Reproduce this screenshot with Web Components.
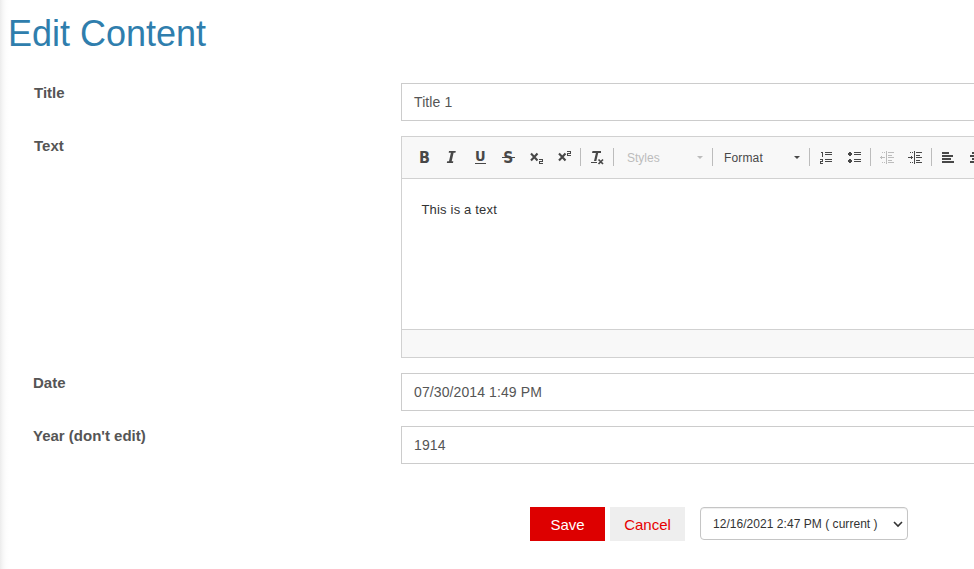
<!DOCTYPE html>
<html lang="en"><head><meta charset="utf-8"><title>Edit Content</title>
<style>
html,body{margin:0;height:100%;overflow:hidden;background:#fff}
body{font-family:"Liberation Sans",Arial,sans-serif;color:#555}
</style></head><body>
<edit-page>
  <form-row label="Title" style="--indent:34px"><text-field>Title 1</text-field></form-row>
  <form-row label="Text" style="--indent:34px"><rich-editor>This is a text</rich-editor></form-row>
  <form-row label="Date"><text-field>07/30/2014 1:49 PM</text-field></form-row>
  <form-row label="Year (don't edit)"><text-field>1914</text-field></form-row>
  <action-button slot="actions" kind="primary">Save</action-button>
  <action-button slot="actions">Cancel</action-button>
  <version-select slot="actions">12/16/2021 2:47 PM ( current )</version-select>
</edit-page>
<script>
const define=(name,html)=>customElements.define(name,class extends HTMLElement{
  constructor(){super();this.attachShadow({mode:'open'}).innerHTML=typeof html==='function'?html(this):html;}
});
define('edit-page',`<style>
:host{display:block;width:974px;height:569px;overflow:hidden;background:linear-gradient(to right,#ececec 0,#f7f7f7 3px,#fdfdfd 6px,#fff 9px)}
h1{margin:0;padding:14px 0 0 8px;font-size:36px;line-height:40px;font-weight:400;color:#2f7ead}
.rows{display:flex;flex-direction:column;gap:15px;padding-top:29px}
.actions{display:flex;padding:43px 0 0 530px;gap:5px;align-items:flex-start}
</style><h1>Edit Content</h1><div class="rows"><slot></slot></div><div class="actions"><slot name="actions"></slot></div>`);
define('form-row',el=>`<style>
:host{display:grid;grid-template-columns:401px 600px}
label{padding-left:var(--indent,33px);font-weight:700;font-size:15px;line-height:20px}
</style><label>${el.getAttribute('label')}</label><slot></slot>`);
define('text-field',`<style>
:host{display:block;box-sizing:border-box;height:38px;border:1px solid #ccc;background:#fff;padding:0 12px;font-size:14px;line-height:37px;letter-spacing:.1px;color:#555}
</style><slot></slot>`);
define('action-button',`<style>
:host{display:block;width:75px;height:34px;line-height:35px;text-align:center;font-size:15px;background:#eee;color:#e60000}
:host([kind=primary]){background:#d00;color:#fff}
</style><slot></slot>`);
define('version-select',`<style>
:host{display:flex;box-sizing:border-box;align-items:center;justify-content:space-between;margin-left:10px;width:208px;height:33px;border:1px solid #c5c5c5;border-radius:4px;padding:0 4px 0 12px;font-size:12px;letter-spacing:.04px;color:#333;background:#fff;box-shadow:inset 0 1px 1px #0001;white-space:nowrap}
</style><span><slot></slot></span><svg width="10" height="8" viewBox="0 0 10 8"><path d="M1 2l4 4 4-4" fill="none" stroke="#333" stroke-width="1.6"/></svg>`);

const T=(s,x,y,size)=>`<text x="${x}" y="${y}" font-family="DejaVu Sans Condensed,DejaVu Sans" font-stretch="condensed" font-weight="700" font-size="${size}">${s}</text>`;
const two=(x,y)=>`<path d="M${x} ${y}h4v3h-3v1h3v1h-4v-3h3v-1h-3z"/>`;
const cross='<path d="M3 4.5l6.5 7M9.5 4.5L3 11.5" fill="none" stroke="currentColor" stroke-width="2.1"/>';
const dent=d=>`<path d="M7 2h1v13H7zM9 3h6v1H9zM9 6h4v1H9zM9 8h6v1H9zM9 11h4v1H9zM9 13h6v1H9zM3 3h1v1H3zM5 3h1v1H5zM3 13h1v1H3zM5 13h1v1H5zM1 8h5v1H1z${d}"/>`;
const icons={
 bold:T('B',3.1,14,16),
 italic:'<path d="M5 2h6.8l-.4 1.7H9.6L7.7 12.3h1.6L9 14H2.8l.4-1.7H5L6.9 3.7H4.7z"/>',
 underline:T('U',3,12.4,14.5)+'<path d="M3 14h11v1H3z"/>',
 strike:T('S',3.2,14,15.5)+'<path d="M2 8h13v1H2z"/>',
 sub:cross+two(11,10),
 sup:cross+two(11,2),
 clear:'<path d="M3.5 2H12v2H9.2L7.3 12H5L6.9 4H3zM2 13h6v1H2z"/><path d="M9.5 10.5l4.5 4.5M14 10.5L9.5 15" fill="none" stroke="currentColor" stroke-width="1.7"/>',
 ol:'<path d="M3 3h2v5H4V4H3zM7 3h7v1H7zM7 5h7v1H7zM7 10h7v1H7zM7 12h7v1H7zM2 10h3v3H3v1h2v1H2v-3h2v-1H2z"/>',
 ul:'<path d="M3 3h2v4H3zM2 4h4v2H2zM3 10h2v4H3zM2 11h4v2H2zM8 3h7v1H8zM8 5h7v1H8zM8 10h7v1H8zM8 12h7v1H8z"/>',
 outdent:dent('M2 7h1v3H2z'),
 indent:dent('M4 7h1v3H4z'),
 left:'<path d="M2 3h7v2H2zM2 6h11v2H2zM2 9h9v2H2zM2 12h12v2H2z"/>',
 center:'<path d="M4 3h7v2H4zM2 6h11v2H2zM4 9h7v2H4zM2 12h12v2H2z"/>'
};
define('tool-button',el=>`<style>
:host{display:block;flex:none;width:16px;height:16px;padding:6px;color:#484848}
:host([off]){color:#bcbcbc}
svg{display:block;overflow:visible;fill:currentColor}
</style><svg width="16" height="16" viewBox="0 0 16 16">${icons[el.getAttribute('icon')]}</svg>`);
define('tool-sep',`<style>:host{display:block;flex:none;width:1px;height:18px;margin:5px 2px;background:#bcbcbc}</style>`);
define('tool-combo',`<style>
:host{display:flex;flex:none;box-sizing:border-box;align-items:center;justify-content:space-between;height:28px;width:92px;padding:0 7px 0 9px;font-size:12px;letter-spacing:.15px;color:#484848}
:host([off]){width:94px;padding-left:11px;letter-spacing:0;color:#bcbcbc}
span{padding-top:2px}
i{border:3px solid transparent;border-top-color:currentColor;border-bottom:0}
</style><span><slot></slot></span><i></i>`);
define('rich-editor',`<style>
:host{display:block;box-sizing:border-box;height:222px;border:1px solid #d1d1d1;background:#fff}
.bar{display:flex;height:35px;padding:6px 0 0 8px;background:#f8f8f8;border-bottom:1px solid #d1d1d1;overflow:hidden;align-items:flex-start}
.body{height:130px;padding:20px 19.5px 0;font-size:13px;line-height:21px;letter-spacing:.18px;color:#333}
.foot{height:27px;background:#f8f8f8;border-top:1px solid #d1d1d1}
</style><div class="bar">
<tool-button icon="bold"></tool-button><tool-button icon="italic"></tool-button><tool-button icon="underline"></tool-button><tool-button icon="strike"></tool-button><tool-button icon="sub"></tool-button><tool-button icon="sup"></tool-button><tool-sep></tool-sep>
<tool-button icon="clear"></tool-button><tool-sep></tool-sep><tool-combo off>Styles</tool-combo><tool-sep></tool-sep><tool-combo>Format</tool-combo><tool-sep></tool-sep>
<tool-button icon="ol"></tool-button><tool-button icon="ul"></tool-button><tool-sep></tool-sep><tool-button off icon="outdent"></tool-button><tool-button icon="indent"></tool-button><tool-sep></tool-sep>
<tool-button icon="left"></tool-button><tool-button icon="center"></tool-button>
</div><div class="body"><slot></slot></div><div class="foot"></div>`);
</script></body></html>
